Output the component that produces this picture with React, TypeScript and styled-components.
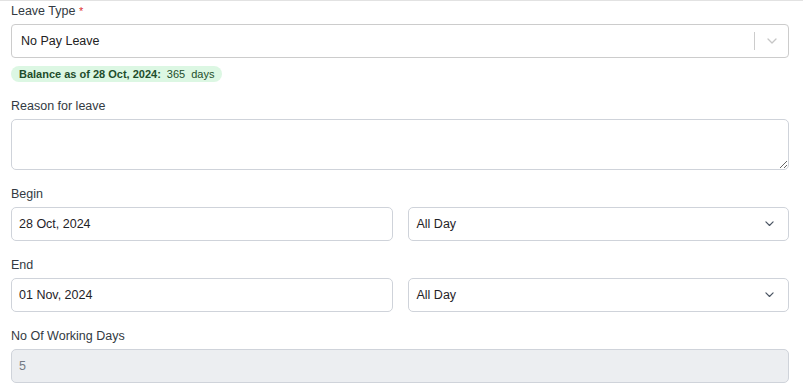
import React, { FC } from 'react';
import styled, { createGlobalStyle } from 'styled-components';

const GlobalStyle = createGlobalStyle`
	* {
		box-sizing: border-box;
	}
	body {
		margin: 0;
		background: #fff;
		font-family: 'Liberation Sans', Arial, sans-serif;
		border-top: 1px solid #e2e2e2;
	}
`;

const Chevron: FC<{ color: string; size?: number }> = ({ color, size = 10 }) => (
	<svg width={size} height={size * 0.6} viewBox="0 0 10 6" fill="none">
		<path d="M1 1l4 4 4-4" stroke={color} strokeWidth="1.3" strokeLinecap="round" strokeLinejoin="round" />
	</svg>
);

const App: FC = () => {
	return (
		<>
			<GlobalStyle />
			<Form>
				<Field>
					<Label>
						Leave Type <Required>*</Required>
					</Label>
					<ComboBox>
						<ComboValue>No Pay Leave</ComboValue>
						<Separator />
						<ComboIndicator>
							<Chevron color="#c6c6c6" />
						</ComboIndicator>
					</ComboBox>
					<Balance>
						<strong>Balance as of 28 Oct, 2024:</strong>
						<Count>365</Count>
						<Count>days</Count>
					</Balance>
				</Field>

				<Field>
					<Label>Reason for leave</Label>
					<TextArea />
				</Field>

				<Field>
					<Label>Begin</Label>
					<Row>
						<Input defaultValue="28 Oct, 2024" />
						<Select>
							<span>All Day</span>
							<Chevron color="#4b5563" size={9} />
						</Select>
					</Row>
				</Field>

				<Field>
					<Label>End</Label>
					<Row>
						<Input defaultValue="01 Nov, 2024" />
						<Select>
							<span>All Day</span>
							<Chevron color="#4b5563" size={9} />
						</Select>
					</Row>
				</Field>

				<Field>
					<Label>No Of Working Days</Label>
					<Input defaultValue="5" disabled />
				</Field>
			</Form>
		</>
	);
};

export default App;

const Form = styled.form`
	display: flex;
	flex-direction: column;
	gap: 16px;
	padding: 2px 14px 0 11px;
`;

const Field = styled.div`
	display: flex;
	flex-direction: column;
	gap: 5px;
`;

const Label = styled.label`
	font-size: 12.5px;
	line-height: 16px;
	color: #333a42;
`;

const Required = styled.span`
	color: #e03131;
	font-size: 11px;
	vertical-align: top;
`;

const ComboBox = styled.div`
	height: 34px;
	display: flex;
	align-items: center;
	border: 1px solid #cccccc;
	border-radius: 4px;
	background: #fff;
`;

const ComboValue = styled.div`
	flex: 1;
	padding-left: 9px;
	font-size: 12.5px;
	color: #222;
`;

const Separator = styled.span`
	width: 1px;
	align-self: stretch;
	margin: 7px 0;
	background: #cccccc;
`;

const ComboIndicator = styled.div`
	width: 33px;
	display: flex;
	justify-content: center;
	align-items: center;
`;

const Balance = styled.div`
	align-self: flex-start;
	margin-top: 3px;
	height: 16px;
	line-height: 16px;
	padding: 0 8px;
	border-radius: 8px;
	background: #dcf7e3;
	color: #1e4d2b;
	font-size: 11px;

	strong {
		font-weight: 700;
	}
`;

const Count = styled.span`
	margin-left: 6px;
`;

const TextArea = styled.textarea`
	height: 51px;
	border: 1px solid #cfd3da;
	border-radius: 5px;
	padding: 6px 8px;
	font-family: inherit;
	font-size: 12.5px;
	resize: vertical;
	outline: none;
`;

const Row = styled.div`
	display: grid;
	grid-template-columns: 1fr 1fr;
	gap: 15px;
`;

const Input = styled.input`
	height: 34px;
	width: 100%;
	border: 1px solid #cfd3da;
	border-radius: 5px;
	padding: 0 7px;
	font-family: inherit;
	font-size: 12.5px;
	color: #1f2328;
	background: #fff;
	outline: none;

	&:disabled {
		background: #eceef1;
		color: #737a84;
	}
`;

const Select = styled.div`
	height: 34px;
	display: flex;
	align-items: center;
	justify-content: space-between;
	border: 1px solid #cfd3da;
	border-radius: 5px;
	padding: 0 14px 0 8px;
	font-size: 12.5px;
	color: #1f2328;
	background: #fff;
`;
